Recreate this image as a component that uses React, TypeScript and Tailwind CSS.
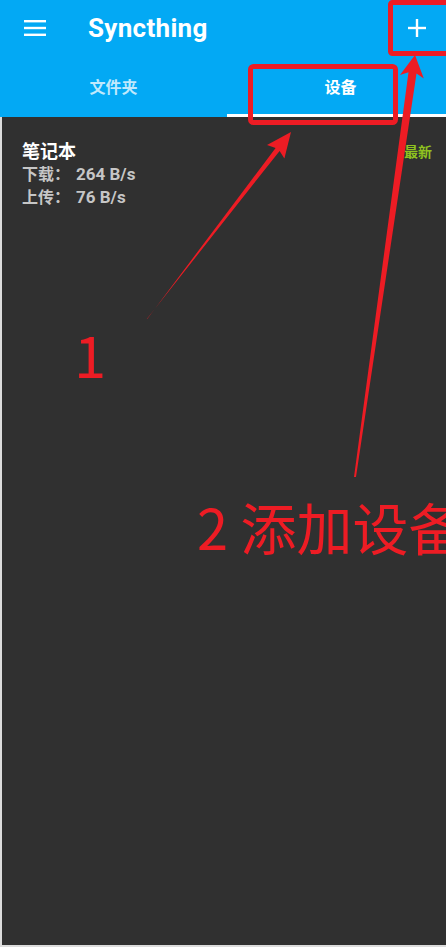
import React from "react";

const cjk = { fontFamily: '"Noto Sans CJK SC", "Noto Sans", sans-serif' };
const roboto = { fontFamily: 'Roboto, "Noto Sans CJK SC", sans-serif' };

export default function App() {
  return (
    <div className="relative w-[446px] h-[947px] overflow-hidden bg-[#303030] flex flex-col" style={cjk}>
      {/* App bar */}
      <div className="bg-[#03a9f4] flex flex-col shrink-0">
        <div className="h-[56px] flex items-center">
          <div className="w-[88px] pl-[24px] flex items-center">
            <svg width="22" height="16" viewBox="0 0 22 16">
              <rect x="0" y="0" width="22" height="2.4" fill="white" />
              <rect x="0" y="6.8" width="22" height="2.4" fill="white" />
              <rect x="0" y="13.6" width="22" height="2.4" fill="white" />
            </svg>
          </div>
          <div className="flex-1 text-white text-[26px] tracking-[0.3px] font-bold leading-none" style={roboto}>
            Syncthing
          </div>
          <div className="w-[56px] flex items-center justify-center pr-[2px]">
            <svg width="18" height="18" viewBox="0 0 18 18">
              <rect x="7.8" y="0" width="2.4" height="18" fill="white" />
              <rect x="0" y="7.8" width="18" height="2.4" fill="white" />
            </svg>
          </div>
        </div>
        <div className="h-[61px] flex w-[454px]">
          <div className="w-[227px] flex items-center justify-center text-white/75 font-bold text-[16px] pb-[2px]">
            文件夹
          </div>
          <div className="w-[227px] flex flex-col">
            <div className="flex-1 flex items-center justify-center text-white font-bold text-[16px] pt-[1px]">
              设备
            </div>
            <div className="h-[3px] bg-white" />
          </div>
        </div>
      </div>

      {/* Content */}
      <div className="flex-1 border-l-2 border-b-2 border-[#dcdcdc] pl-[20px] pr-[14px] pt-[22px]">
        <div className="flex justify-between">
          <div className="flex flex-col">
            <div className="text-white font-bold text-[18px] leading-[22px]">笔记本</div>
            <div className="text-[#c6c6c6] font-bold text-[16px] leading-[22px] mt-[1px]">
              下载：<span className="ml-[6px] text-[17px]" style={roboto}>264 B/s</span>
            </div>
            <div className="text-[#c6c6c6] font-bold text-[16px] leading-[22px]">
              上传：<span className="ml-[6px] text-[17px]" style={roboto}>76 B/s</span>
            </div>
          </div>
          <div className="text-[#8fc31f] font-bold text-[14px] leading-[22px] pt-[1px]">最新</div>
        </div>
      </div>

      {/* Annotations overlay */}
      <svg className="absolute left-0 top-0 pointer-events-none" width="446" height="947" viewBox="0 0 446 947">
        <rect x="390.5" y="2.5" width="60" height="51" rx="2" fill="none" stroke="#ED1C24" strokeWidth="5" />
        <rect x="250.5" y="66.5" width="145" height="56" rx="3" fill="none" stroke="#ED1C24" strokeWidth="5" />
        <polygon
          points="146.6,319.3 279.6,150.9 284.4,158.5 291,132 267,145 275.6,147.9 147.4,318.7"
          fill="#ED1C24"
        />
        <polygon
          points="354,477 408.5,72.2 400,75.1 415,55 423.8,78.5 416.5,73.4 356,477"
          fill="#ED1C24"
        />
      </svg>
      <div className="absolute left-[74px] top-[324px] text-[#ED1C24] text-[58px] leading-none">1</div>
      <div className="absolute left-[197px] top-[498px] text-[#ED1C24] text-[56px] leading-none whitespace-nowrap">
        2 添加设备
      </div>
    </div>
  );
}
